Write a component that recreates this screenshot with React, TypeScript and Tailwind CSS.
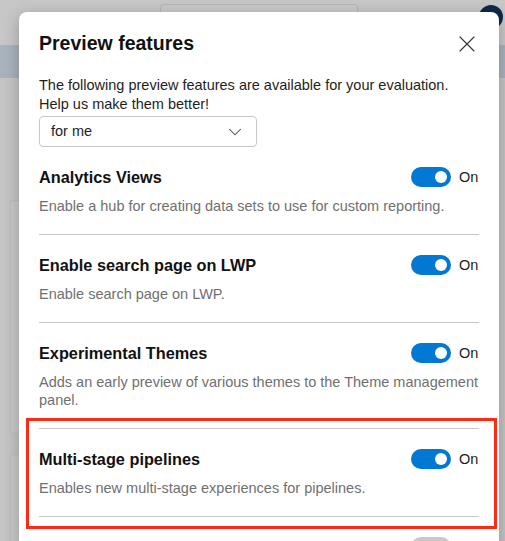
import { X, ChevronDown } from 'lucide-react'

const FEATURES = [
  { title: 'Analytics Views', desc: 'Enable a hub for creating data sets to use for custom reporting.', on: true },
  { title: 'Enable search page on LWP', desc: 'Enable search page on LWP.', on: true },
  {
    title: 'Experimental Themes',
    desc: 'Adds an early preview of various themes to the Theme management panel.',
    on: true,
  },
  { title: 'Multi-stage pipelines', desc: 'Enables new multi-stage experiences for pipelines.', on: true, marked: true },
  { title: 'New build log view', desc: 'Use the new build log view.', on: false },
]

function Toggle({ on }: { on: boolean }) {
  return (
    <div className="flex items-center gap-2">
      <div
        className={
          on
            ? 'w-10 h-5 rounded-full bg-[#0078d4] flex items-center justify-end px-[4px]'
            : 'w-10 h-5 rounded-full bg-[#c8c8c8] flex items-center justify-start px-[4px]'
        }
      >
        <div className="w-3 h-3 rounded-full bg-white" />
      </div>
      <span className="text-[14.5px] leading-5 text-[#1e1e1e] w-5">{on ? 'On' : 'Off'}</span>
    </div>
  )
}

function Feature({ title, desc, on, marked, first }: { title: string; desc: string; on: boolean; marked?: boolean; first?: boolean }) {
  return (
    <div className="relative">
      <div className={first ? 'pt-[20px] pb-[19px]' : 'border-t border-[#c8c8c8] pt-[20px] pb-[19px]'}>
        <div className="flex items-center justify-between h-5">
          <div className="text-[16.3px] font-bold text-[#111]">{title}</div>
          <Toggle on={on} />
        </div>
        <div className="mt-[10px] text-[14.5px] leading-[18px] text-[#707070]">{desc}</div>
      </div>
      {marked && (
        <div className="absolute left-[-13px] right-[-18px] top-[-10px] bottom-[-13px] border-[3px] border-[#ff2a12]" />
      )}
    </div>
  )
}

export default function App() {
  return (
    <div
      className="relative w-[505px] h-[541px] overflow-hidden bg-[#c4c4c4]"
      style={{ fontFamily: '"Liberation Sans", Arial, sans-serif' }}
    >
      {/* page behind the dialog */}
      <div className="h-[45px] bg-[#c7c7c7] flex items-start pl-[160px] pr-[2px]">
        <div className="w-[198px] h-[12px] mt-[4px] border border-[#b4b4b4] bg-[#c9c9c9] rounded-sm" />
        <div className="ml-auto mt-[5px] w-[24px] h-[24px] rounded-full bg-[#0d2a48]" />
      </div>
      <div className="h-[33px] bg-[#a9b3bd]" />
      <div className="flex flex-col gap-[20px] pl-[10px] pt-[122px]">
        <div className="w-[40px] h-[234px] rounded bg-[#c9c9c9] border border-[#bcbcbc]" />
        <div className="w-[40px] h-[120px] rounded bg-[#c9c9c9] border border-[#bcbcbc]" />
      </div>

      {/* dialog */}
      <div className="absolute left-[19px] top-[12px] w-[480px] h-[560px] bg-white rounded-lg shadow-[0_4px_16px_rgba(0,0,0,0.25)] px-[20px]">
        <div className="flex items-center justify-between pt-[19px] h-[44px]">
          <h1 className="text-[19.5px] font-bold text-[#111]">Preview features</h1>
          <X className="w-[28px] h-[28px] text-[#333] mr-[-2px]" strokeWidth={0.95} />
        </div>
        <div className="mt-[20px] text-[14.5px] leading-[19px] text-[#1e1e1e]">
          The following preview features are available for your evaluation.
          <br />
          Help us make them better!
        </div>
        <div className="mt-[2px] w-[218px] h-[31px] border border-[#c8c8c8] rounded-sm flex items-center justify-between pl-[11px] pr-[10px]">
          <span className="text-[14.5px] text-[#1e1e1e]">for me</span>
          <ChevronDown className="w-[22px] h-[22px] text-[#444]" strokeWidth={1.1} />
        </div>
        <div className="w-[440px]">
          {FEATURES.map((f, i) => (
            <Feature key={f.title} {...f} first={i === 0} />
          ))}
        </div>
      </div>
    </div>
  )
}
